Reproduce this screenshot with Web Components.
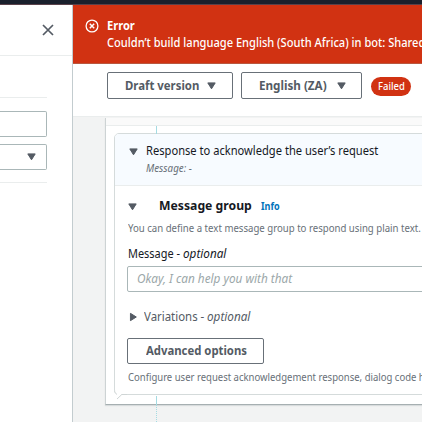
<!DOCTYPE html>
<html lang="en"><head><meta charset="utf-8"><title>Bot editor</title>
<style>html,body{margin:0;width:422px;height:422px;overflow:hidden;background:#fff;font-family:"Noto Sans","Open Sans",sans-serif;color:#545b64}</style></head>
<body><bot-editor></bot-editor>
<script>
const define=(name,html,ready)=>customElements.define(name,class extends HTMLElement{
  constructor(){super();this.attachShadow({mode:'open'}).innerHTML=html;}
  connectedCallback(){if(ready)ready(this,this.shadowRoot);}
});

/* One line of label text, condensed to its width attribute. */
define('fit-text',`<style>
:host{display:block;flex:none;white-space:nowrap;height:16px;line-height:16px;font-size:12px}
span{display:inline-block;transform-origin:0 50%}
</style><span><slot></slot></span>`,(el,root)=>{
  const w=parseFloat(el.getAttribute('w'));el.style.width=w+'px';
  const s=root.querySelector('span');
  requestAnimationFrame(()=>{s.style.transform='scaleX('+w/s.offsetWidth+')';});
  s.style.transform='scaleX('+w/s.getBoundingClientRect().width+')';
});

define('ui-caret',`<style>:host{display:block;flex:none;width:9px;height:8px}:host([right]){transform:rotate(-90deg)}svg{display:block}</style>
<svg width="9" height="8" viewBox="0 0 9 8"><path d="M.8 .9H8.2L4.5 6.8Z" fill="#545b64" stroke="#545b64" stroke-width="1" stroke-linejoin="round"/></svg>`);

define('ui-button',`<style>:host{display:flex;box-sizing:border-box;flex:none;align-items:center;border:1px solid #687078;border-radius:2px;background:#fff;height:27px;padding-left:17px;font-weight:700;color:#545b64}</style><slot></slot>`);

define('ui-badge',`<style>:host{display:flex;flex:none;box-sizing:border-box;width:40px;height:19px;border-radius:10px;background:#d13212;color:#fff;align-items:center;justify-content:center;padding-bottom:1px}</style><slot></slot>`);

define('side-panel',`<style>
:host{display:flex;flex-direction:column;box-sizing:border-box;flex:none;width:73px;background:#fff;border-right:1px solid #c3cccf}
header{height:51px;box-sizing:border-box;border-bottom:1px solid #eaeded;padding:19px 0 0 42px}
svg{display:block}
.line{height:1px;width:47px;background:#eaeded}
.field{box-sizing:border-box;width:47px;height:26px;border:1px solid #aab7b8;border-left:0;border-radius:0 2px 2px 0;display:flex;align-items:center;padding-left:27px}
</style>
<header><svg width="12" height="12" viewBox="0 0 12 12"><path d="M1 1L11 11M11 1L1 11" stroke="#545b64" stroke-width="1.7"/></svg></header>
<div class="line" style="margin-top:41px"></div>
<div class="field" style="margin-top:13px"></div>
<div class="field" style="margin-top:7px"><ui-caret></ui-caret></div>
<div class="line" style="margin-top:12px"></div>`);

define('error-banner',`<style>
:host{display:flex;flex:none;box-sizing:border-box;height:59px;background:#d13212;color:#fff;padding:13px 0 0 12px;gap:8px;border-bottom:1px solid #b9573f}
svg{flex:none;margin-top:1px}.copy{display:flex;flex-direction:column;gap:1px}
</style>
<svg width="14" height="14" viewBox="0 0 14 14" fill="none" stroke="#fff"><circle cx="7" cy="7" r="5.9" stroke-width="1.3"/><path d="M4.8 4.8L9.2 9.2M9.2 4.8L4.8 9.2" stroke-width="1.5"/></svg>
<div class="copy"><fit-text w="28" style="font-size:11.5px;font-weight:700">Error</fit-text>
<fit-text w="318" style="font-size:12px;font-weight:500">Couldn’t build language English (South Africa) in bot: Shared</fit-text></div>`);

define('tool-bar',`<style>:host{display:flex;flex:none;box-sizing:border-box;height:53px;background:#fff;border-bottom:1px solid #eaeded;padding:8px 0 0 34px}</style>
<ui-button style="width:126px"><fit-text w="74">Draft version</fit-text><ui-caret style="margin-left:8px"></ui-caret></ui-button>
<ui-button style="width:121px;margin-left:8px"><fit-text w="68">English (ZA)</fit-text><ui-caret style="margin-left:10px"></ui-caret></ui-button>
<ui-badge style="margin:5px 0 0 9px"><fit-text w="27" style="font-size:10.5px;font-weight:500">Failed</fit-text></ui-badge>`);

define('response-card',`<style>
:host{display:block;position:relative;box-sizing:border-box;width:330px;height:262px;border:1px solid #d5dbdb;border-radius:5px;background:#fff}
header{height:52px;box-sizing:border-box;background:#f7fbff;border-bottom:1px solid #eaeded;border-radius:4px 0 0;display:flex;padding:9px 0 0 14px;gap:8px}
header ui-caret{margin-top:5px}
.row{display:flex;align-items:center}
.body{display:flex;flex-direction:column;align-items:flex-start;padding-left:12px}
.body>fit-text,.body>.row{margin-left:1px}
.input{box-sizing:border-box;width:330px;height:26px;border:1px solid #aab7b8;border-radius:2px;padding-left:9px;display:flex;align-items:center;color:#9ba7a9;font-style:italic}
.small{font-size:10px;color:#687078}
.tail{position:absolute;left:-2px;top:257px}
</style>
<header><ui-caret></ui-caret><div><fit-text w="232" style="color:#16191f">Response to acknowledge the user’s request</fit-text>
<fit-text w="46" class="small" style="font-style:italic;margin-top:1px">Message: -</fit-text></div></header>
<div class="body">
<div class="row" style="margin-top:11px;height:16px"><ui-caret style="margin:4px 0 0 0"></ui-caret><fit-text w="93" style="font-size:13px;font-weight:700;color:#16191f;margin-left:22px">Message group</fit-text><fit-text w="19" style="font-size:10px;font-weight:700;color:#0073bb;margin:1px 0 0 9px">Info</fit-text></div>
<fit-text w="292.5" class="small" style="margin-top:7px">You can define a text message group to respond using plain text.</fit-text>
<div class="row" style="margin-top:10px;color:#16191f"><fit-text w="52">Message -</fit-text><fit-text w="43" style="font-style:italic;margin-left:3px">optional</fit-text></div>
<div class="input" style="margin-top:4px"><fit-text w="155">Okay, I can help you with that</fit-text></div>
<div class="row" style="margin-top:17px;padding-left:1px"><ui-caret right></ui-caret><fit-text w="60" style="margin-left:6px">Variations -</fit-text><fit-text w="43" style="font-style:italic;margin-left:3px">optional</fit-text></div>
<ui-button style="width:137px;height:26px;margin-top:13px;padding-left:18px"><fit-text w="101">Advanced options</fit-text></ui-button>
<fit-text w="297" class="small" style="margin-top:5px">Configure user request acknowledgement response, dialog code h</fit-text>
</div>
<svg class="tail" width="14" height="9" viewBox="0 0 14 9"><path d="M1 0Q1 2 4 4V8L9 3H13V0Z" fill="#fff"/><path d="M1.5 0Q1.7 2.3 4 3.4M4 8L8.8 3.5H14" fill="none" stroke="#cfd5d5"/></svg>`);

define('flow-canvas',`<style>
:host{display:block;position:relative;flex:1;background:#f2f3f3;padding:1px 0 0 32px;overflow:hidden}
.panel{box-sizing:border-box;width:340px;height:287px;background:#fff;border-left:1px solid #cdd3d4;border-bottom:1px solid #a6afb1;box-shadow:0 1px 1px #d8dcdd}
.band{height:7px;background:#fafafa;border-bottom:1px solid #eaeded}
response-card{margin:7px 0 0 8px}
.link{position:absolute;left:83px;width:0;border-left:1px solid #a5dbe2}
.next{height:10px;width:340px;margin-top:17px;background:#fff;border:1px solid #e1e5e5}
</style>
<div class="panel"><div class="band"></div><response-card></response-card></div>
<div class="next"></div>
<div class="link" style="top:9px;height:8px"></div>
<div class="link" style="top:279px;height:9px"></div>
<div class="link" style="top:288px;height:17px;border-left-style:dotted"></div>`);

define('bot-editor',`<style>
:host{display:flex;flex-direction:column;width:422px;height:422px;overflow:hidden}
.top{height:5px;flex:none;background:linear-gradient(#1a202c 80%,#59414a 80%)}
.page{display:flex;flex:1;min-height:0}
main{display:flex;flex-direction:column;flex:1;min-width:0;overflow:hidden}
</style><div class="top"></div><div class="page"><side-panel></side-panel><main><error-banner></error-banner><tool-bar></tool-bar><flow-canvas></flow-canvas></main></div>`);
</script></body></html>
